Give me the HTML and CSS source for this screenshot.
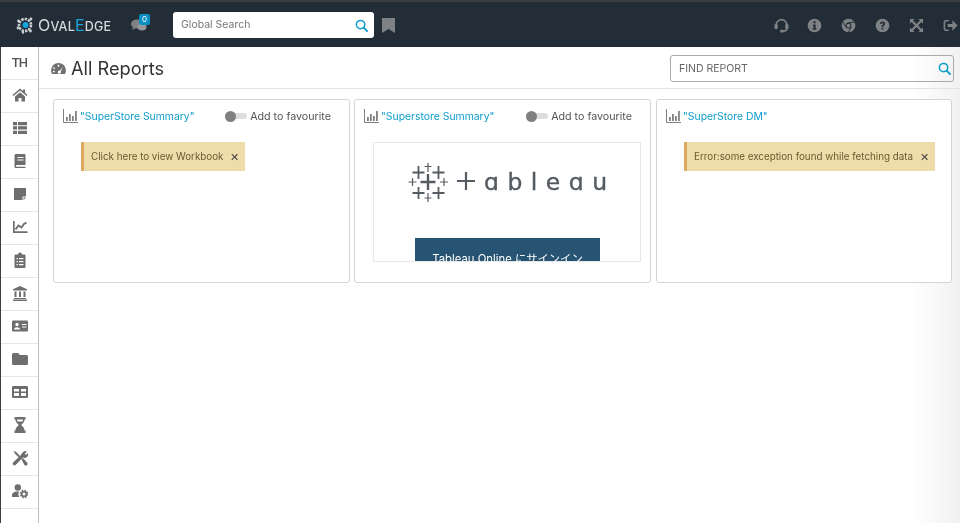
FILE: index.html
```html
<!DOCTYPE html>
<html lang="en">
<head>
<meta charset="utf-8">
<title>All Reports</title>
<link rel="stylesheet" href="styles.css">
</head>
<body>
<svg class="defs" width="0" height="0" aria-hidden="true">
  <symbol id="i-search" viewBox="0 0 14 14"><circle cx="6" cy="6" r="4.5" fill="none" stroke="currentColor" stroke-width="1.6"/><path d="M9.3 9.3 13 13" stroke="currentColor" stroke-width="2" stroke-linecap="round"/></symbol>
  <symbol id="i-chart" viewBox="0 0 15 14"><path d="M.5 0v13.5H15" fill="none" stroke="currentColor"/><path d="M3 8h1.800v4H3zM6 5h1.800v7H6zM9 7h1.800v5H9zM12 2h1.800v10H12z" fill="currentColor"/></symbol>
</svg>
<header class="topbar">
  <div class="brand">
    <svg class="brand-mark" viewBox="0 0 18 18"><circle cx="9" cy="9" r="6" fill="none" stroke="#c9ced2" stroke-width="2.6" stroke-dasharray="2.4 1"/><circle cx="9.5" cy="9" r="3" fill="#16a5dc"/><circle cx="2.500" cy="5" r="1.400" fill="#c9ced2"/><circle cx="15" cy="3" r="1.400" fill="#c9ced2"/><circle cx="2" cy="12" r="1.400" fill="#c9ced2"/><circle cx="14.500" cy="15" r="1.400" fill="#c9ced2"/><circle cx="7" cy="16.5" r="1.200" fill="#c9ced2"/></svg>
    <span class="brand-name"><b>O</b>VAL<b class="brand-e">E</b>DGE</span>
  </div>
  <div class="chat">
    <svg class="chat-icon" viewBox="0 0 16 14"><ellipse cx="6" cy="6" rx="6" ry="4.5" fill="#7f8285"/><path d="m2 9-1 3 4-2z" fill="#7f8285"/><ellipse cx="11" cy="9" rx="4.5" ry="3.4" fill="#96999b"/></svg>
    <span class="badge">0</span>
  </div>
  <div class="global-search">
    <span class="global-search-text">Global Search</span>
    <svg class="search-icon"><use href="#i-search"/></svg>
  </div>
  <svg class="bookmark" viewBox="0 0 13 15"><path d="M0 0h13v15L6.5 11 0 15z" fill="#7f8285"/></svg>
  <nav class="top-actions">
    <svg class="top-icon" viewBox="0 0 16 16"><path d="M2.300 9V7.500a5.700 5.700 0 0 1 11.400 0V11q0 3-3.500 3H8" fill="none" stroke="currentColor" stroke-width="1.800"/><rect x=".5" y="6.500" width="3.500" height="5.500" rx="1.500" fill="currentColor"/><rect x="12" y="6.500" width="3.500" height="5.500" rx="1.500" fill="currentColor"/><rect x="6.500" y="12.500" width="4" height="3" rx="1.200" fill="currentColor"/></svg>
    <svg class="top-icon" viewBox="0 0 16 16"><circle cx="8" cy="8" r="7.3" fill="currentColor"/><path d="M6.800 3.500h2.400v2.200H6.800zM6.300 7h2.900v4.300h.8v1.300H6v-1.300h.8V8.300h-.5z" fill="#222d38"/></svg>
    <svg class="top-icon" viewBox="0 0 16 16"><circle cx="8" cy="8" r="7.3" fill="currentColor"/><circle cx="8" cy="8" r="3.1" fill="#222d38"/><circle cx="8" cy="8" r="2" fill="currentColor"/><path d="M8 4.600h6.200M5.100 9.800 2 4.200M10.900 9.800 7.700 15.200" stroke="#222d38" stroke-width="1"/></svg>
    <svg class="top-icon" viewBox="0 0 16 16"><circle cx="8" cy="8" r="7.3" fill="currentColor"/><path d="M5.400 6.300C5.400 3 10.800 3 10.800 6.200c0 2-2 1.900-2 3.300H7c0-2.500 1.900-2.200 1.900-3.400 0-1-1.700-1-1.700.2zM7 10.500h1.800v1.800H7z" fill="#222d38"/></svg>
    <svg class="top-icon" viewBox="0 0 16 16"><path d="M1 1h5L4.300 2.700 8 6.300l3.700-3.600L10 1h5v5l-1.700-1.700L9.700 8l3.600 3.700L15 10v5h-5l1.700-1.700L8 9.700l-3.700 3.600L6 15H1v-5l1.700 1.700L6.300 8 2.700 4.300 1 6z" fill="currentColor"/></svg>
    <svg class="top-icon" viewBox="0 0 16 16"><path d="M6 3H3q-1.500 0-1.500 1.500v7Q1.500 13 3 13h3" fill="none" stroke="currentColor" stroke-width="1.700"/><path d="M5 6.300h5V2.500L15.500 8 10 13.500V9.700H5z" fill="currentColor"/></svg>
  </nav>
</header>

<div class="workspace">
  <aside class="sidebar">
    <div class="side-item side-initials">TH</div>
    <div class="side-item"><svg class="side-icon" viewBox="0 0 16 16"><path d="M8 1.500.5 8l1 1.100L8 3.500l6.500 5.600 1-1.100L13 5.800V2.500h-2v1.600zM3 9.500 8 5.200l5 4.300V14.500H9.500V11h-3v3.500H3z"/></svg></div>
    <div class="side-item"><svg class="side-icon" viewBox="0 0 16 16"><path d="M1 2h4v3.300H1zM6 2h9v3.300H6zM1 6.300h4v3.300H1zM6 6.300h9v3.300H6zM1 10.700h4V14H1zM6 10.700h9V14H6z"/></svg></div>
    <div class="side-item"><svg class="side-icon" viewBox="0 0 16 16"><path fill-rule="evenodd" d="M4 1h8.500a1 1 0 0 1 1 1v10h-9a1 1 0 0 0 0 1.800h9V15H4a1.500 1.500 0 0 1-1.500-1.500v-11A1.500 1.500 0 0 1 4 1zM5.500 4v1h6V4zm0 2.500v1h6v-1z"/></svg></div>
    <div class="side-item"><svg class="side-icon" viewBox="0 0 16 16"><path d="M2 2h12v8.500h-3.500V14H2zM11.500 11.500H14L11.500 14z"/></svg></div>
    <div class="side-item"><svg class="side-icon" viewBox="0 0 16 16"><path d="M1 2h1.700v10.300H15.500V14H1z"/><path d="m3.500 10.500 3-4 3 2 2.500-3.500 2.500-1.500" fill="none" stroke="currentColor" stroke-width="1.900"/></svg></div>
    <div class="side-item"><svg class="side-icon" viewBox="0 0 16 16"><path fill-rule="evenodd" d="M3.500 2.500H6a2 2 0 0 1 4 0h2.500a1 1 0 0 1 1 1V15a1 1 0 0 1-1 1h-9a1 1 0 0 1-1-1V3.500a1 1 0 0 1 1-1zM4.500 6v1.200h1.300V6zm2.500 0v1.200h4.500V6zM4.500 9v1.200h1.300V9zM7 9v1.200h4.500V9zm-2.500 3v1.200h1.300V12zM7 12v1.200h4.500V12z"/></svg></div>
    <div class="side-item"><svg class="side-icon" viewBox="0 0 16 16"><path d="M8 1 15 4.300V5.500H1V4.300zM2.500 6.500h2v5.500h-2zM7 6.500h2v5.500H7zM11.500 6.500h2v5.500h-2zM2 13h12v1H2zM1 14.500h14V16H1z"/></svg></div>
    <div class="side-item"><svg class="side-icon" viewBox="0 0 16 16"><path fill-rule="evenodd" d="M1.300 2.500h13.400A1.300 1.300 0 0 1 16 3.800v8.400a1.300 1.300 0 0 1-1.300 1.300H1.300A1.300 1.300 0 0 1 0 12.200V3.800a1.300 1.300 0 0 1 1.300-1.300zM5 4.800a1.700 1.700 0 1 0 0 3.400 1.700 1.700 0 0 0 0-3.400zM2 11.500h6c0-3-6-3-6 0zM10 6v1h4.500V6zm0 2.500v1h4.500v-1z"/></svg></div>
    <div class="side-item"><svg class="side-icon" viewBox="0 0 16 16"><path d="M1.500 2h4.700l1.600 2h6.700A1.500 1.500 0 0 1 16 5.500v7a1.500 1.500 0 0 1-1.500 1.500h-13A1.500 1.500 0 0 1 0 12.500v-9A1.500 1.500 0 0 1 1.500 2z"/></svg></div>
    <div class="side-item"><svg class="side-icon" viewBox="0 0 16 16"><path fill-rule="evenodd" d="M1.300 2h13.400A1.300 1.300 0 0 1 16 3.300v9.400a1.300 1.300 0 0 1-1.300 1.300H1.300A1.300 1.300 0 0 1 0 12.700V3.300A1.300 1.300 0 0 1 1.300 2zM2 5v2.500h5V5zm7 0v2.500h5V5zm-7 4v3h5V9zm7 0v3h5V9z"/></svg></div>
    <div class="side-item"><svg class="side-icon" viewBox="0 0 16 16"><path fill-rule="evenodd" d="M2.500 0h11v2.500h-1c0 4-3 4-3 5.500s3 1.500 3 5.500h1V16h-11v-2.500h1c0-4 3-4 3-5.500s-3-1.500-3-5.500h-1zM5 2.500c0 .8.200 1.500.4 2h5.200c.2-.5.400-1.200.4-2z"/></svg></div>
    <div class="side-item"><svg class="side-icon" viewBox="0 0 16 16"><path d="M1.500 1 4 1.800 8 6 10.500 2.700A3.500 3.500 0 0 1 15 1.500L12.800 3.700 14 5 15.800 3A3.500 3.500 0 0 1 11 7.500L3.800 14.800A1.700 1.700 0 0 1 1.300 12.300L6.600 7.300 3 3.800z"/><path d="m9.500 9.500 1.500-1.500 4 4.500a1.700 1.700 0 0 1-2.500 2.500z"/></svg></div>
    <div class="side-item"><svg class="side-icon" viewBox="0 0 16 16"><circle cx="5.800" cy="4.500" r="3.200"/><path d="M0 14v-1.500C0 9.500 2.500 8.500 5 8.500h2a6 6 0 0 0 0 5.500z"/><circle cx="12" cy="11" r="2.400" fill="none" stroke="currentColor" stroke-width="1.800"/><circle cx="12" cy="11" r="3.800" fill="none" stroke="currentColor" stroke-width="1.200" stroke-dasharray="1.500 1.500"/></svg></div>
  </aside>

  <main class="content">
    <div class="title-bar">
      <svg class="title-icon" viewBox="0 0 16 14"><path fill-rule="evenodd" d="M8 1a8 8 0 0 1 8 8c0 1.500-.4 2.900-1 4H1C.4 11.900 0 10.500 0 9a8 8 0 0 1 8-8zM7.200 3v2h1.600V3zM3 5.500l-.9 1 1.500 1.400.9-1zm9.800-.2-3.500 4a1.700 1.700 0 1 0 1.200 1zM2 9.500v1.500h2V9.500z"/></svg>
      <h1 class="title">All Reports</h1>
      <div class="find-report">
        <span class="find-report-text">FIND REPORT</span>
        <svg class="search-icon"><use href="#i-search"/></svg>
      </div>
    </div>

    <section class="cards">
      <article class="card">
        <div class="card-head">
          <svg class="chart-icon"><use href="#i-chart"/></svg>
          <a class="card-link">"SuperStore Summary"</a>
          <span class="favourite"><span class="toggle"><span class="knob"></span></span>Add to favourite</span>
        </div>
        <div class="alert alert-short"><span>Click here to view Workbook</span><span class="alert-close">✕</span></div>
      </article>

      <article class="card">
        <div class="card-head">
          <svg class="chart-icon"><use href="#i-chart"/></svg>
          <a class="card-link">"Superstore Summary"</a>
          <span class="favourite"><span class="toggle"><span class="knob"></span></span>Add to favourite</span>
        </div>
        <div class="frame">
          <div class="tableau-logo">
            <svg class="tableau-mark" viewBox="0 0 40 40" fill="none" stroke="#555b60">
              <path d="M20 12v16M12.500 20h15" stroke-width="2.400"/>
              <path d="M10.500 4v13M4.500 10.500h12M30.500 4v13M24.500 10.500h12M10.500 25v12M4.500 31h12M30.500 25v12M24.500 31h12" stroke-width="1.800"/>
              <path d="M20 1v9M16.500 4.500h7M20 31v9M16.500 36h7M4.500 16v8M.5 20h8M36 16v8M32 20h8" stroke-width="1.200"/>
            </svg>
            <svg class="tableau-t" viewBox="0 0 18 18"><path d="M9 0v18M0 9h18" stroke="#555b60" stroke-width="2.200"/></svg>
            <span class="tableau-word">ɑbleɑu</span>
          </div>
          <div class="signin">Tableau Online にサインイン</div>
        </div>
      </article>

      <article class="card card-last">
        <div class="card-head">
          <svg class="chart-icon"><use href="#i-chart"/></svg>
          <a class="card-link">"SuperStore DM"</a>
        </div>
        <div class="alert alert-wide"><span>Error:some exception found while fetching data</span><span class="alert-close">✕</span></div>
      </article>
    </section>
  </main>
</div>
</body>
</html>
```

FILE: styles.css
```css
* { box-sizing: border-box; }

html, body {
  margin: 0;
  height: 523px;
  overflow: hidden;
}

body {
  font-family: Inter, "Noto Sans CJK JP", sans-serif;
  color: #555;
  background: #fff;
  display: flex;
  flex-direction: column;
  filter: blur(0.45px);
}

.defs { position: absolute; }

/* Top bar */
.topbar {
  height: 47px;
  flex: none;
  display: flex;
  align-items: center;
  background: #222d38;
  border-top: 2px solid #3a3e42;
  padding: 1px 0 0 16px;
}

.brand {
  width: 115px;
  display: flex;
  align-items: center;
  gap: 4px;
}

.brand-mark { width: 18px; height: 18px; }

.brand-name {
  font-size: 12.5px;
  font-weight: 500;
  color: #d5d9dc;
  letter-spacing: 0.2px;
}

.brand-name b { font-size: 16px; font-weight: 400; }
.brand-name .brand-e { color: #16a5dc; }

.chat {
  position: relative;
  width: 42px;
  height: 20px;
}

.chat-icon {
  position: absolute;
  left: 0;
  top: 3px;
  width: 16px;
  height: 14px;
}

.badge {
  position: absolute;
  left: 8px;
  top: -1px;
  width: 11px;
  height: 11px;
  border-radius: 2px;
  background: #0a8fc4;
  color: #fff;
  font-size: 8px;
  line-height: 11px;
  text-align: center;
}

.global-search {
  width: 201px;
  height: 26px;
  background: #fff;
  border-radius: 3px;
  display: flex;
  align-items: center;
  justify-content: space-between;
  padding: 0 6px 0 8px;
}

.global-search-text {
  font-size: 10.5px;
  color: #777;
  margin-bottom: 2px;
}

.search-icon {
  width: 13px;
  height: 13px;
  color: #0e9ccb;
}

.bookmark {
  width: 13px;
  height: 15px;
  margin-left: 8px;
}

.top-actions {
  margin-left: auto;
  display: flex;
  gap: 18.8px;
  margin-right: 2.5px;
  color: #7f8285;
}

.top-icon { width: 15px; height: 15px; }

/* Main area */
.workspace {
  flex: 1;
  display: flex;
  min-height: 0;
  background: linear-gradient(90deg, #fff 95%, #f1f1f1 100%);
}

.sidebar {
  width: 39px;
  flex: none;
  background: #fff;
  border-left: 1px solid #3a3f44;
  border-right: 1px solid #bdbdbd;
}

.side-item {
  height: 33px;
  display: flex;
  align-items: center;
  justify-content: center;
  padding-bottom: 2px;
  border-bottom: 1px solid #e6e6e6;
  color: #6e6e6e;
}

.side-initials {
  font-family: Roboto, sans-serif;
  font-size: 13px;
  font-weight: 500;
  letter-spacing: -0.8px;
  color: #555;
}

.side-icon {
  width: 16px;
  height: 16px;
  fill: currentColor;
}

.content {
  flex: 1;
  min-width: 0;
}

.title-bar {
  height: 42px;
  display: flex;
  align-items: center;
  padding: 1px 6px 0 12px;
  border-bottom: 1px solid #e2e2e2;
}

.title-icon {
  width: 15px;
  height: 13px;
  fill: #6e6e6e;
}

.title {
  margin: 0 0 0 5px;
  font-size: 18.2px;
  font-weight: 400;
  color: #333;
}

.find-report {
  margin-left: auto;
  width: 284px;
  height: 27px;
  border: 1px solid #aaa;
  border-radius: 3px;
  display: flex;
  align-items: center;
  justify-content: space-between;
  padding: 0 2px 0 8px;
}

.find-report-text {
  font-size: 10.5px;
  color: #666;
}

/* Cards */
.cards {
  display: grid;
  grid-template-columns: 297px 297px 297px;
  gap: 4px;
  padding: 10px 0 0 14px;
}

.card {
  height: 184px;
  border: 1px solid #d4d4d4;
  border-radius: 3px;
  background: #fff;
  padding: 0 9px;
}

.card-last { margin-left: 1px; }

.card-head {
  height: 32px;
  display: flex;
  align-items: center;
}

.chart-icon {
  width: 15px;
  height: 14px;
  color: #808080;
  flex: none;
}

.card-link {
  margin-left: 2px;
  font-size: 10.4px;
  color: #0e9ccb;
}

.favourite {
  margin-left: auto;
  margin-right: 9px;
  display: flex;
  align-items: center;
  gap: 3px;
  font-size: 10.7px;
  color: #555;
}

.toggle {
  width: 22px;
  height: 6px;
  background: #ddd;
  border-radius: 3px;
  display: flex;
  align-items: center;
}

.knob {
  width: 11px;
  height: 11px;
  flex: none;
  border-radius: 50%;
  background: #808080;
}

.alert {
  margin-top: 10px;
  margin-left: 18px;
  height: 29px;
  background: #eedcab;
  border-left: 3px solid #dda860;
  color: #6b5a2e;
  font-size: 9.8px;
  display: flex;
  align-items: center;
  justify-content: space-between;
  padding: 0 6px 0 7px;
}

.alert-short { width: 164px; }
.alert-wide { width: 251px; }

.alert-close { font-size: 11px; color: #444; }

.frame {
  margin: 10px 0 0 9px;
  width: 268px;
  height: 120px;
  border: 1px solid #e8e8e8;
  overflow: hidden;
}

.tableau-logo {
  height: 95px;
  display: flex;
  align-items: flex-start;
  padding: 19px 0 0 34px;
}

.tableau-mark { width: 40px; height: 40px; flex: none; }

.tableau-t {
  width: 18px;
  height: 18px;
  margin: 10px 0 0 9px;
  flex: none;
}

.tableau-word {
  margin-left: 9px;
  font-family: "DejaVu Sans", sans-serif;
  font-size: 23.5px;
  line-height: 40px;
  letter-spacing: 8.5px;
  color: #555b60;
  -webkit-text-stroke: 0.4px #555b60;
}

.signin {
  margin-left: 41px;
  width: 185px;
  height: 60px;
  background: #285473;
  color: #fff;
  font-size: 11.3px;
  text-align: center;
  padding-top: 12px;
}
```
